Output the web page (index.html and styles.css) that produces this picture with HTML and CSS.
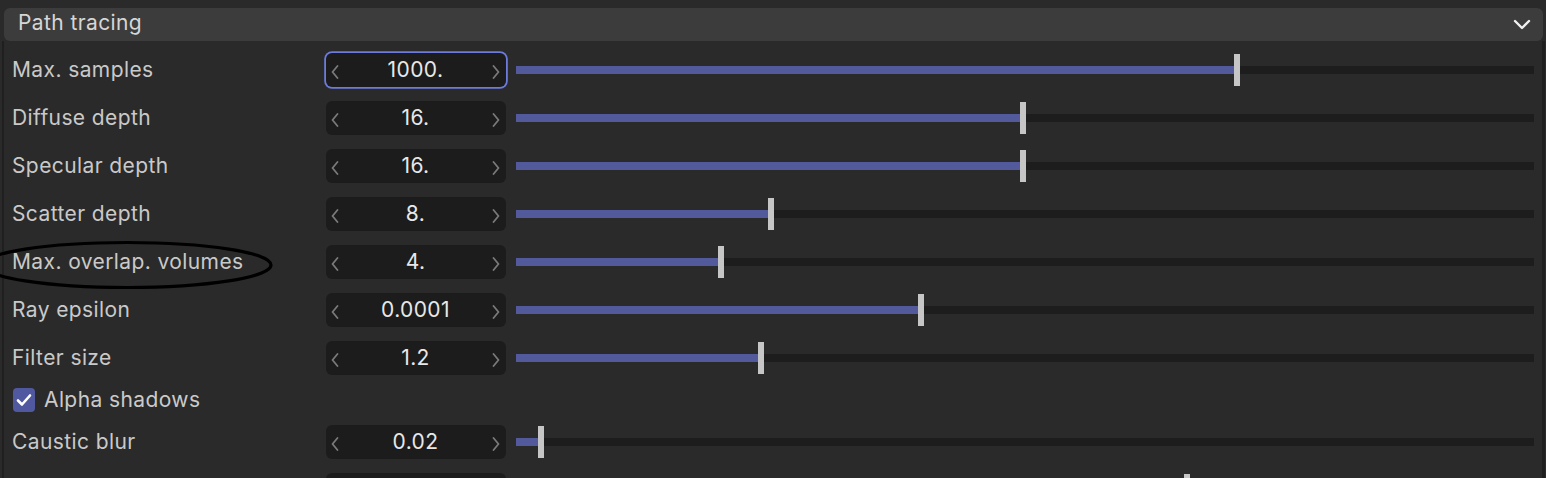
FILE: index.html
```html
<!DOCTYPE html>
<html>
<head>
<meta charset="utf-8">
<link rel="stylesheet" href="styles.css">
</head>
<body>
<div class="panel">
  <div class="header">
    <span class="header-title">Path tracing</span>
    <svg class="header-chev" width="18" height="12" viewBox="0 0 18 12"><path d="M2 2 L9 9 L16 2" fill="none" stroke="#f0f0f0" stroke-width="2.4" stroke-linecap="round" stroke-linejoin="round"/></svg>
  </div>
  <div class="content">
    <div class="row">
      <div class="label">Max. samples</div>
      <div class="num focused"><svg class="chev" viewBox="0 0 10 18"><path d="M7.5 3 L2.5 9 L7.5 15" /></svg><span class="val">1000.</span><svg class="chev" viewBox="0 0 10 18"><path d="M2.5 3 L7.5 9 L2.5 15" /></svg></div>
      <div class="slider"><div class="track"></div><div class="fill" style="width:70.53%"></div><div class="thumb" style="left:70.53%"></div></div>
    </div>
    <div class="row">
      <div class="label">Diffuse depth</div>
      <div class="num"><svg class="chev" viewBox="0 0 10 18"><path d="M7.5 3 L2.5 9 L7.5 15" /></svg><span class="val">16.</span><svg class="chev" viewBox="0 0 10 18"><path d="M2.5 3 L7.5 9 L2.5 15" /></svg></div>
      <div class="slider"><div class="track"></div><div class="fill" style="width:49.51%"></div><div class="thumb" style="left:49.51%"></div></div>
    </div>
    <div class="row">
      <div class="label">Specular depth</div>
      <div class="num"><svg class="chev" viewBox="0 0 10 18"><path d="M7.5 3 L2.5 9 L7.5 15" /></svg><span class="val">16.</span><svg class="chev" viewBox="0 0 10 18"><path d="M2.5 3 L7.5 9 L2.5 15" /></svg></div>
      <div class="slider"><div class="track"></div><div class="fill" style="width:49.51%"></div><div class="thumb" style="left:49.51%"></div></div>
    </div>
    <div class="row">
      <div class="label">Scatter depth</div>
      <div class="num"><svg class="chev" viewBox="0 0 10 18"><path d="M7.5 3 L2.5 9 L7.5 15" /></svg><span class="val">8.</span><svg class="chev" viewBox="0 0 10 18"><path d="M2.5 3 L7.5 9 L2.5 15" /></svg></div>
      <div class="slider"><div class="track"></div><div class="fill" style="width:24.75%"></div><div class="thumb" style="left:24.75%"></div></div>
    </div>
    <div class="row">
      <div class="label">Max. overlap. volumes</div>
      <div class="num"><svg class="chev" viewBox="0 0 10 18"><path d="M7.5 3 L2.5 9 L7.5 15" /></svg><span class="val">4.</span><svg class="chev" viewBox="0 0 10 18"><path d="M2.5 3 L7.5 9 L2.5 15" /></svg></div>
      <div class="slider"><div class="track"></div><div class="fill" style="width:19.84%"></div><div class="thumb" style="left:19.84%"></div></div>
    </div>
    <div class="row">
      <div class="label">Ray epsilon</div>
      <div class="num"><svg class="chev" viewBox="0 0 10 18"><path d="M7.5 3 L2.5 9 L7.5 15" /></svg><span class="val">0.0001</span><svg class="chev" viewBox="0 0 10 18"><path d="M2.5 3 L7.5 9 L2.5 15" /></svg></div>
      <div class="slider"><div class="track"></div><div class="fill" style="width:39.49%"></div><div class="thumb" style="left:39.49%"></div></div>
    </div>
    <div class="row">
      <div class="label">Filter size</div>
      <div class="num"><svg class="chev" viewBox="0 0 10 18"><path d="M7.5 3 L2.5 9 L7.5 15" /></svg><span class="val">1.2</span><svg class="chev" viewBox="0 0 10 18"><path d="M2.5 3 L7.5 9 L2.5 15" /></svg></div>
      <div class="slider"><div class="track"></div><div class="fill" style="width:23.77%"></div><div class="thumb" style="left:23.77%"></div></div>
    </div>
    <div class="row check-row">
      <span class="checkbox"><svg width="18" height="16" viewBox="0 0 18 16"><path d="M3 8.5 L7 12.5 L15 3.5" fill="none" stroke="#ffffff" stroke-width="2.6" stroke-linecap="round" stroke-linejoin="round"/></svg></span>
      <span class="check-label">Alpha shadows</span>
    </div>
    <div class="row">
      <div class="label">Caustic blur</div>
      <div class="num"><svg class="chev" viewBox="0 0 10 18"><path d="M7.5 3 L2.5 9 L7.5 15" /></svg><span class="val">0.02</span><svg class="chev" viewBox="0 0 10 18"><path d="M2.5 3 L7.5 9 L2.5 15" /></svg></div>
      <div class="slider"><div class="track"></div><div class="fill" style="width:2.16%"></div><div class="thumb" style="left:2.16%"></div></div>
    </div>
    <div class="row">
      <div class="label"></div>
      <div class="num"></div>
      <div class="slider"><div class="track"></div><div class="fill" style="width:65.62%"></div><div class="thumb" style="left:65.62%"></div></div>
    </div>
  </div>
</div>
<svg class="annotation" width="300" height="60" viewBox="0 0 300 60"><ellipse cx="147" cy="25" rx="144" ry="22.5" fill="none" stroke="#000000" stroke-width="3.2"/></svg>
</body>
</html>
```

FILE: styles.css
```css
html, body {
  margin: 0;
  padding: 0;
  background: #2a2a2a;
  overflow: hidden;
}

body {
  font-family: "Inter", "Noto Sans", sans-serif;
  font-size: 21px;
  letter-spacing: 0.4px;
  color: #cacaca;
  width: 1546px;
  height: 478px;
  position: relative;
}

.panel {
  padding-top: 8px;
  padding-left: 2px;
  padding-right: 1px;
  height: 478px;
  box-sizing: border-box;
  overflow: hidden;
}

.header {
  margin-left: 2px;
  margin-right: 2px;
  height: 33px;
  background: #3c3c3c;
  border-radius: 6px;
  display: flex;
  align-items: center;
  justify-content: space-between;
  padding: 0 12px 0 14px;
  box-sizing: border-box;
}

.header-title {
  color: #d6d6d6;
  font-size: 21px;
  position: relative;
  top: -2px;
}

.header-chev {
  display: block;
}

.content {
  border-left: 2px solid #1f1f1f;
  border-right: 3px solid #1f1f1f;
  padding: 5px 8px 0 8px;
  height: 600px;
  background: #2a2a2a;
}

.row {
  height: 48px;
  display: flex;
  align-items: center;
}

.label {
  width: 314px;
  flex: none;
  color: #c9c9c9;
  position: relative;
  top: -1px;
}

.num {
  width: 180px;
  height: 34px;
  flex: none;
  background: #1c1c1c;
  border-radius: 6px;
  display: flex;
  align-items: center;
  justify-content: space-between;
  padding: 0 5px 0 4px;
  box-sizing: border-box;
  margin-right: 10px;
}

.num.focused {
  box-shadow: 0 0 0 1.8px #6c7bdc;
}

.chev {
  width: 10px;
  height: 18px;
  flex: none;
  margin-top: 4px;
}

.chev path {
  fill: none;
  stroke: #7a7a7a;
  stroke-width: 1.8;
  stroke-linecap: round;
  stroke-linejoin: round;
}

.val {
  color: #e8e8e8;
  font-size: 21px;
  position: relative;
  top: -1px;
}

.slider {
  flex: 1;
  height: 32px;
  position: relative;
}

.track {
  position: absolute;
  left: 0;
  right: 0;
  top: 12px;
  height: 8px;
  background: #1d1d1d;
}

.fill {
  position: absolute;
  left: 0;
  top: 12px;
  height: 8px;
  background: #525a9c;
}

.thumb {
  position: absolute;
  top: 0;
  width: 6px;
  height: 32px;
  background: #c6c6c6;
}

.check-row {
  height: 36px;
  padding-left: 1px;
}

.checkbox {
  width: 22px;
  height: 24px;
  border-radius: 4px;
  background: #5058a0;
  display: flex;
  align-items: center;
  justify-content: center;
  margin-right: 9px;
}

.check-label {
  color: #cacaca;
  position: relative;
  top: -1px;
}

.annotation {
  position: absolute;
  left: -20px;
  top: 240px;
}
```
